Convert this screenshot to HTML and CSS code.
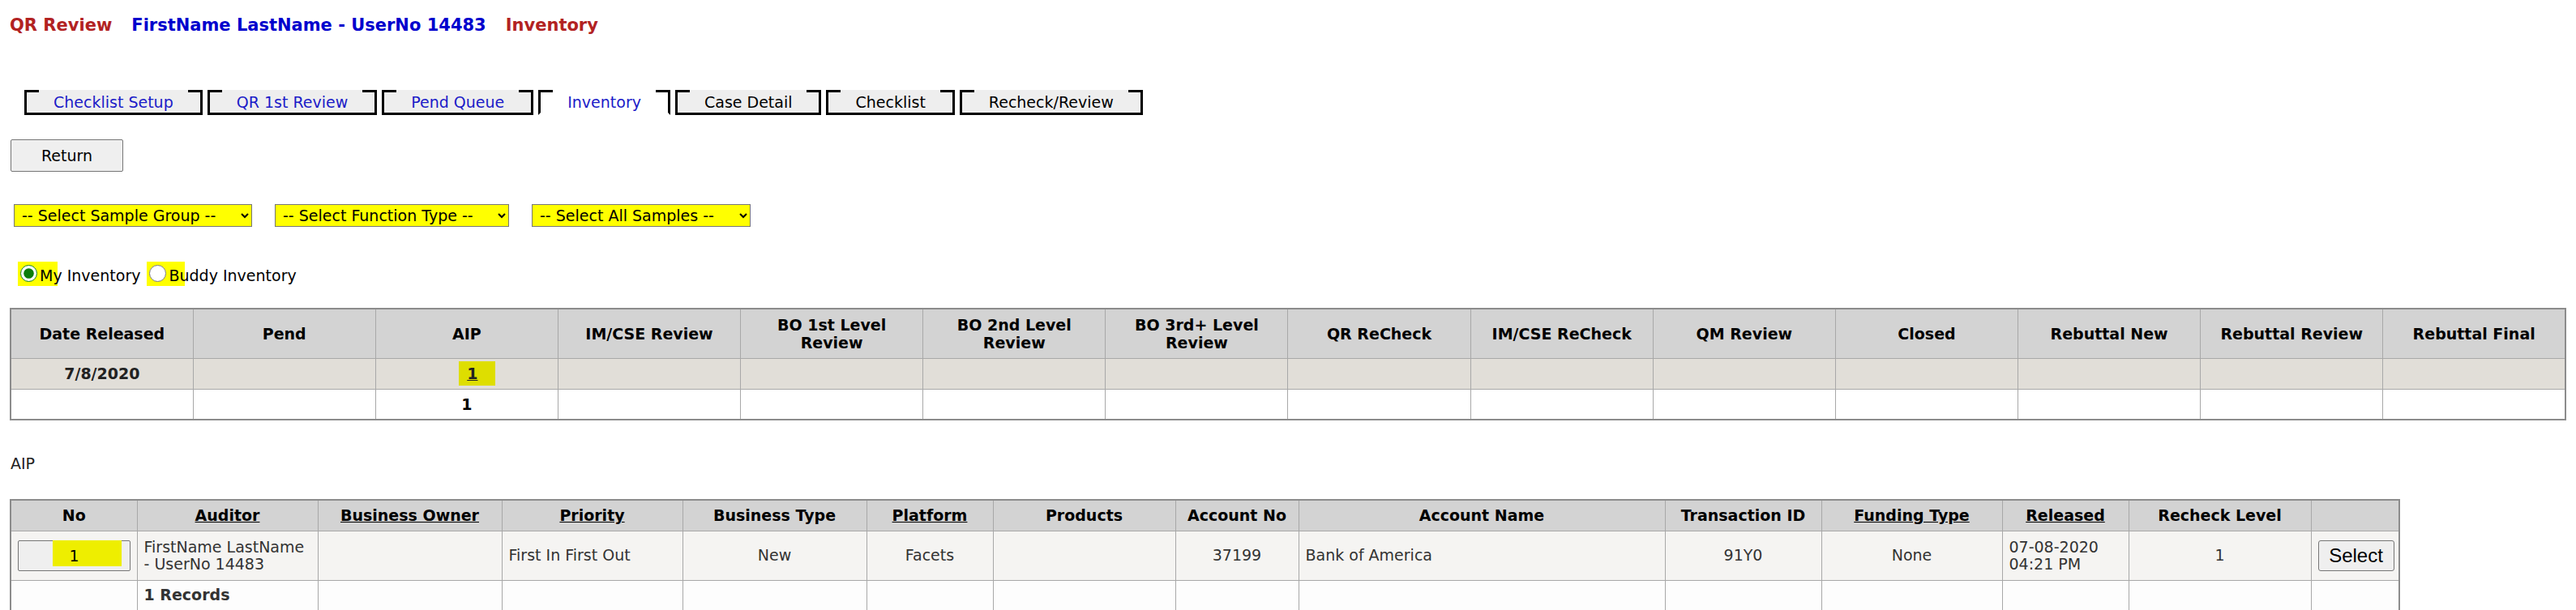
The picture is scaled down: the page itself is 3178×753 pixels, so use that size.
FILE: index.html
```html
<!DOCTYPE html>
<html lang="en">

<head>
    <meta charset="UTF-8">
    <meta name="viewport" content="width=device-width, initial-scale=1.0">
    <title>QR Review - Inventory</title>
    <link rel="stylesheet" href="styles.css">
</head>

<body>
    <div class="page-title">
        <span class="title-red">QR Review</span>
        <span class="title-blue">FirstName LastName - UserNo 14483</span>
        <span class="title-red">Inventory</span>
    </div>

    <ul class="tabs">
        <li class="tab"><a href="#">Checklist Setup</a></li>
        <li class="tab"><a href="#">QR 1st Review</a></li>
        <li class="tab"><a href="#">Pend Queue</a></li>
        <li class="tab active"><a href="#">Inventory</a></li>
        <li class="tab disabled"><span>Case Detail</span></li>
        <li class="tab disabled"><span>Checklist</span></li>
        <li class="tab disabled"><span>Recheck/Review</span></li>
    </ul>

    <button class="btn btn-return">Return</button>

    <div class="filters">
        <select class="sel sel-group">
            <option>-- Select Sample Group --</option>
        </select>
        <select class="sel sel-function">
            <option>-- Select Function Type --</option>
        </select>
        <select class="sel sel-samples">
            <option>-- Select All Samples --</option>
        </select>
    </div>

    <div class="inventory-type">
        <label class="opt"><span class="marker"><input type="radio" name="inv" checked>M</span><span class="opt-text">y Inventory</span></label>
        <label class="opt"><span class="marker"><input type="radio" name="inv">B</span><span class="opt-text">uddy Inventory</span></label>
    </div>

    <table class="grid summary">
        <thead>
            <tr class="head">
                <th>Date Released</th>
                <th>Pend</th>
                <th>AIP</th>
                <th>IM/CSE Review</th>
                <th>BO 1st Level<br>Review</th>
                <th>BO 2nd Level<br>Review</th>
                <th>BO 3rd+ Level<br>Review</th>
                <th>QR ReCheck</th>
                <th>IM/CSE ReCheck</th>
                <th>QM Review</th>
                <th>Closed</th>
                <th>Rebuttal New</th>
                <th>Rebuttal Review</th>
                <th>Rebuttal Final</th>
            </tr>
        </thead>
        <tbody>
            <tr class="released-row">
                <td>7/8/2020</td>
                <td></td>
                <td><span class="count-mark"><a href="#">1</a></span></td>
                <td></td>
                <td></td>
                <td></td>
                <td></td>
                <td></td>
                <td></td>
                <td></td>
                <td></td>
                <td></td>
                <td></td>
                <td></td>
            </tr>
            <tr class="total-row">
                <td></td>
                <td></td>
                <td>1</td>
                <td></td>
                <td></td>
                <td></td>
                <td></td>
                <td></td>
                <td></td>
                <td></td>
                <td></td>
                <td></td>
                <td></td>
                <td></td>
            </tr>
        </tbody>
    </table>

    <div class="section-label">AIP</div>

    <table class="grid results">
        <colgroup>
            <col class="c-no">
            <col class="c-auditor">
            <col class="c-owner">
            <col class="c-priority">
            <col class="c-btype">
            <col class="c-platform">
            <col class="c-products">
            <col class="c-accno">
            <col class="c-accname">
            <col class="c-trans">
            <col class="c-funding">
            <col class="c-released">
            <col class="c-recheck">
            <col class="c-action">
        </colgroup>
        <thead>
            <tr class="head">
                <th>No</th>
                <th><a href="#">Auditor</a></th>
                <th><a href="#">Business Owner</a></th>
                <th><a href="#">Priority</a></th>
                <th>Business Type</th>
                <th><a href="#">Platform</a></th>
                <th>Products</th>
                <th>Account No</th>
                <th>Account Name</th>
                <th>Transaction ID</th>
                <th><a href="#">Funding Type</a></th>
                <th><a href="#">Released</a></th>
                <th>Recheck Level</th>
                <th></th>
            </tr>
        </thead>
        <tbody>
            <tr class="main-row">
                <td class="center"><button class="btn btn-no"><span class="no-mark">1</span></button></td>
                <td>FirstName LastName<br>- UserNo 14483</td>
                <td></td>
                <td>First In First Out</td>
                <td class="center">New</td>
                <td class="center">Facets</td>
                <td></td>
                <td class="center">37199</td>
                <td>Bank of America</td>
                <td class="center">91Y0</td>
                <td class="center">None</td>
                <td>07-08-2020<br>04:21 PM</td>
                <td class="center">1</td>
                <td class="center"><button class="btn btn-select">Select</button></td>
            </tr>
            <tr class="foot-row">
                <td></td>
                <td class="records">1 Records</td>
                <td></td>
                <td></td>
                <td></td>
                <td></td>
                <td></td>
                <td></td>
                <td></td>
                <td></td>
                <td></td>
                <td></td>
                <td></td>
                <td></td>
            </tr>
        </tbody>
    </table>
</body>

</html>
```

FILE: styles.css
```css
/* QR Review - Inventory page */
body {
    margin: 0;
    padding: 19px 12px 0;
    font-family: "DejaVu Sans", Verdana, sans-serif;
    font-size: 19px;
    color: #000;
    background: #fff;
}

/* Header title */
.page-title {
    display: flex;
    gap: 24px;
    font-size: 21px;
    font-weight: 700;
    line-height: 24px;
}

.title-red {
    color: #b22222;
}

.title-blue {
    color: #0000cd;
}

/* Tabs */
.tabs {
    list-style: none;
    margin: 68px 0 0 18px;
    padding: 0;
    display: flex;
    gap: 6px;
}

.tab {
    height: 31px;
    box-sizing: border-box;
    padding: 3px 33px 0;
    line-height: 25px;
    white-space: nowrap;
    border: 3px solid #000;
    border-top: 0;
    background:
        linear-gradient(#000, #000) left top / 15px 3px no-repeat,
        linear-gradient(#000, #000) right top / 15px 3px no-repeat,
        #eee;
}

.tab a {
    color: #1c1cc8;
    text-decoration: none;
}

.tab.active {
    border-bottom-color: transparent;
    background:
        linear-gradient(#000, #000) left top / 15px 3px no-repeat,
        linear-gradient(#000, #000) right top / 15px 3px no-repeat,
        #fff;
}

.tab.disabled span {
    color: #000;
}

/* Buttons */
.btn {
    font-family: "DejaVu Sans", Verdana, sans-serif;
    font-size: 19px;
    color: #000;
    background-color: #efefef;
    border: 1px solid #767676;
    border-radius: 2px;
    padding: 0;
    cursor: pointer;
}

.btn-return {
    display: block;
    margin: 30px 0 0 1px;
    width: 139px;
    height: 40px;
}

.btn-no {
    width: 139px;
    height: 38px;
    line-height: 22px;
}

.no-mark {
    background: #eeee00;
    padding: 8px 52px 2px 20px;
    margin-left: 32px;
}

.btn-select {
    width: 94px;
    height: 38px;
    font-family: "Liberation Sans", Arial, sans-serif;
    font-size: 24px;
    border-radius: 3px;
}

/* Filter dropdowns */
.filters {
    display: flex;
    gap: 28px;
    margin: 40px 0 0 5px;
}

.sel {
    height: 28px;
    font-family: "DejaVu Sans", Verdana, sans-serif;
    font-size: 19px;
    color: #000;
    background-color: #ffff00;
    border: 1px solid #767676;
    border-radius: 0;
    padding: 0 2px 0 5px;
}

.sel-group {
    width: 294px;
}

.sel-function {
    width: 289px;
}

.sel-samples {
    width: 270px;
}

/* My / Buddy inventory */
.inventory-type {
    display: flex;
    height: 30px;
    margin: 43px 0 0 10px;
    line-height: 22px;
}

.opt {
    display: flex;
    align-items: flex-end;
    margin-right: 8px;
}

.marker {
    display: flex;
    align-items: flex-end;
    height: 30px;
    box-sizing: border-box;
    padding: 0 6px 2px 3px;
    margin-right: -6px;
    background: #ffff00;
}

.marker input {
    align-self: center;
    width: 21px;
    height: 21px;
    margin: 0 3px 0 0;
    accent-color: #0b7d0b;
}

.opt-text {
    position: relative;
    margin-bottom: 2px;
}

/* Grids */
.grid {
    border-collapse: collapse;
    table-layout: fixed;
    border: 2px solid #8c8c8c;
}

.grid th,
.grid td {
    border: 1px solid #a8a8a8;
    padding: 0 6px;
    line-height: 22px;
}

.grid th {
    background-color: #d3d3d3;
    font-weight: 700;
    text-align: center;
}

.grid th a {
    color: #000;
    text-decoration: underline;
}

.summary {
    width: 3154px;
    margin-top: 27px;
}

.summary tr.head {
    height: 61px;
}

.summary tbody tr {
    height: 38px;
}

.summary td {
    text-align: center;
    font-weight: 700;
}

.released-row td {
    background-color: #e1ded8;
    color: #222;
}

.total-row td {
    background-color: #fff;
}

.count-mark {
    display: inline-block;
    background: #dede00;
    padding: 3px 22px 3px 10px;
    margin-left: 26px;
    line-height: 24px;
}

.count-mark a {
    color: #222;
    text-decoration: underline;
}

.section-label {
    margin: 42px 0 0 1px;
    line-height: 22px;
    color: #222;
}

.results {
    width: 2947px;
    margin-top: 33px;
}

.results tr.head {
    height: 38px;
}

.results td {
    color: #333;
    padding: 0 8px;
    line-height: 21px;
}

.results .center {
    text-align: center;
}

.main-row {
    height: 61px;
}

.main-row td {
    background-color: #f5f4f2;
}

.foot-row {
    height: 38px;
}

.foot-row td {
    background-color: #fdfdfd;
}

.records {
    font-weight: 700;
    color: #000;
}

.c-no { width: 156px; }
.c-auditor { width: 223px; }
.c-owner { width: 227px; }
.c-priority { width: 223px; }
.c-btype { width: 227px; }
.c-platform { width: 156px; }
.c-products { width: 225px; }
.c-accno { width: 152px; }
.c-accname { width: 452px; }
.c-trans { width: 193px; }
.c-funding { width: 223px; }
.c-released { width: 156px; }
.c-recheck { width: 225px; }
.c-action { width: 109px; }
```
